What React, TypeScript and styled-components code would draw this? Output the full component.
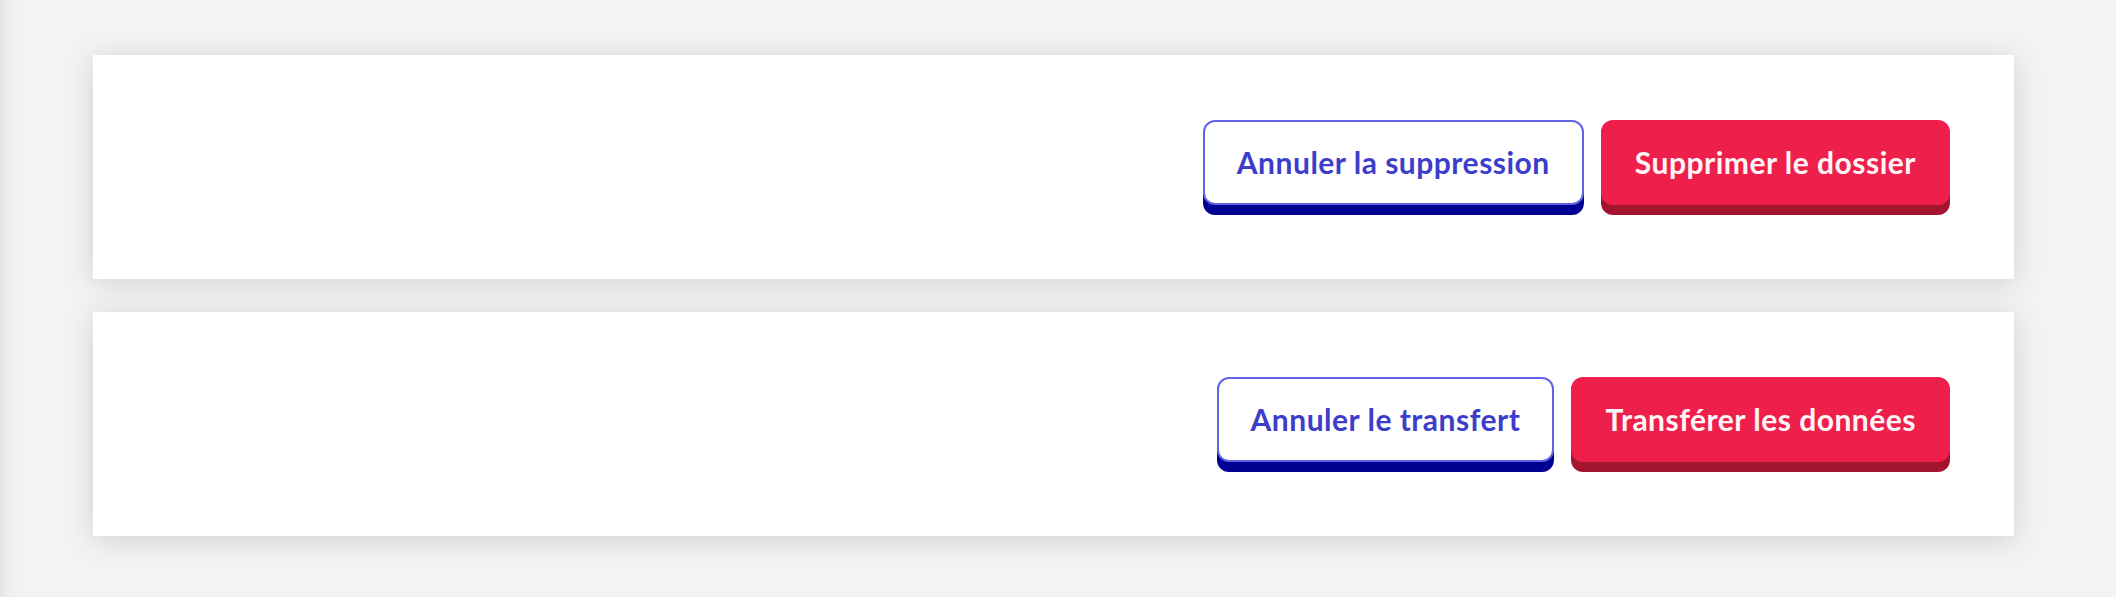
import React from "react";
import styled, { createGlobalStyle } from "styled-components";

const GlobalStyle = createGlobalStyle`
  html, body {
    margin: 0;
    padding: 0;
  }
  body {
    width: 2116px;
    height: 597px;
    overflow: hidden;
    background: linear-gradient(to right, #e4e4e4 0px, #efefef 10px, #f3f3f3 22px, #f3f3f3 100%);
    font-family: Lato, "Open Sans", sans-serif;
  }
`;

const Page = styled.main`
  display: flex;
  flex-direction: column;
  gap: 33px;
  padding: 55px 102px 0 93px;
`;

const Card = styled.section`
  height: 224px;
  background: #ffffff;
  box-shadow: 0 4px 28px rgba(0, 0, 0, 0.14);
  display: flex;
  align-items: center;
  justify-content: flex-end;
  padding: 0 64px 0 0;
  box-sizing: border-box;
`;

const Actions = styled.div`
  display: flex;
  align-items: flex-start;
  gap: 17px;
  margin-bottom: 10px;
`;

const Button = styled.button<{ $variant: "secondary" | "primary" }>`
  height: 85px;
  box-sizing: border-box;
  padding: 0 32px;
  border-radius: 12px;
  font-family: Lato, "Open Sans", sans-serif;
  font-weight: 700;
  font-size: 30px;
  letter-spacing: 0.5px;
  cursor: pointer;
  display: flex;
  align-items: center;
  justify-content: center;
  border: 2px solid ${(p) => (p.$variant === "primary" ? "#ef1f4b" : "#6262e4")};
  background: ${(p) => (p.$variant === "primary" ? "#ef1f4b" : "#ffffff")};
  color: ${(p) => (p.$variant === "primary" ? "#fff5f7" : "#3d3dcc")};
  box-shadow: 0 10px 0 ${(p) => (p.$variant === "primary" ? "#a3142f" : "#000091")};
`;

export default function App() {
  return (
    <>
      <GlobalStyle />
      <Page>
        <Card>
          <Actions>
            <Button $variant="secondary">Annuler la suppression</Button>
            <Button $variant="primary">Supprimer le dossier</Button>
          </Actions>
        </Card>
        <Card>
          <Actions>
            <Button $variant="secondary">Annuler le transfert</Button>
            <Button $variant="primary">Transférer les données</Button>
          </Actions>
        </Card>
      </Page>
    </>
  );
}
